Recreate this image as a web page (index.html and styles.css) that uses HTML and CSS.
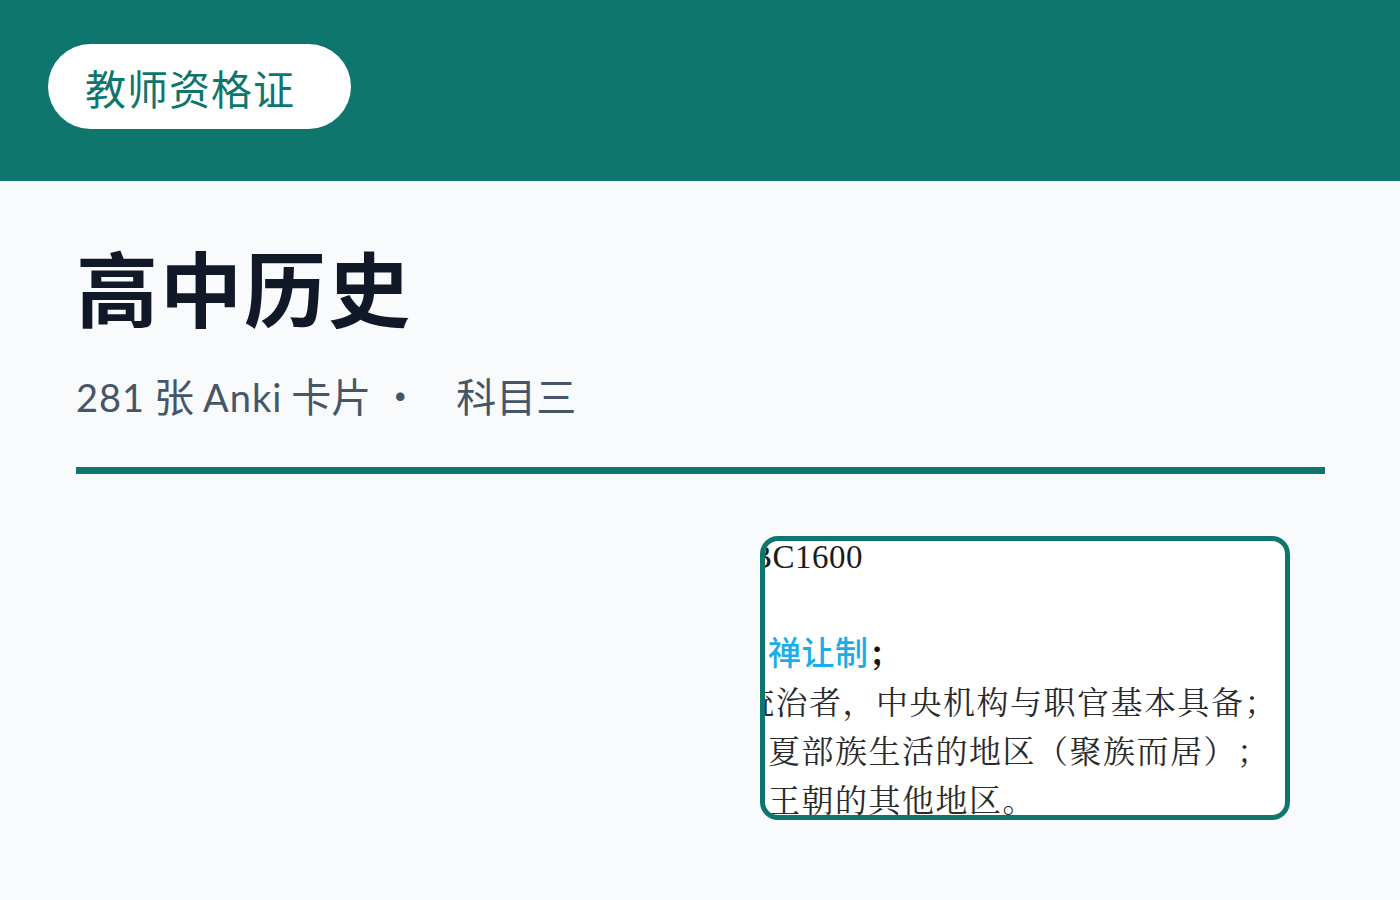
FILE: index.html
```html
<!DOCTYPE html>
<html lang="zh-CN">
<head>
<meta charset="utf-8">
<title>高中历史</title>
<link rel="stylesheet" href="styles.css">
</head>
<body>
<header class="topbar">
  <div class="pill">教师资格证</div>
</header>
<main class="main">
  <h1 class="title">高中历史</h1>
  <p class="subtitle"><span class="count"><span class="lat">281</span> 张 <span class="lat">Anki</span> 卡片 ·</span><span class="subject">科目三</span></p>
  <div class="divider"></div>
  <section class="grid">
    <div class="col-empty"></div>
    <div class="card">
      <div class="card-body">
        <div class="line latin indent-bc">BC1600</div>
        <div class="line blank">&nbsp;</div>
        <div class="line"><span class="hl">禅让制</span><span class="semi">；</span></div>
        <div class="line indent-cut">统治者，中央机构与职官基本具备；</div>
        <div class="line">夏部族生活的地区（聚族而居）；</div>
        <div class="line">王朝的其他地区。</div>
      </div>
    </div>
  </section>
</main>
</body>
</html>
```

FILE: styles.css
```css
html, body {
  margin: 0;
  padding: 0;
}
body {
  background: #f8fafc;
  font-family: "Noto Sans CJK SC", "Noto Sans", sans-serif;
  width: 1400px;
  height: 900px;
  overflow: hidden;
}
.topbar {
  height: 181px;
  background: #0f766e;
  box-sizing: border-box;
  padding: 44px 0 0 48px;
}
.pill {
  display: inline-flex;
  align-items: center;
  box-sizing: border-box;
  height: 85px;
  width: 303px;
  padding-left: 37px;
  background: #ffffff;
  border-radius: 43px;
  color: #0f766e;
  font-size: 41px;
  font-weight: 400;
  letter-spacing: 1px;
}
.main {
  padding: 0 75px 0 76px;
}
.title {
  margin: 55px 0 0 0;
  font-size: 82px;
  line-height: 100px;
  font-weight: 600;
  letter-spacing: 2px;
  color: #111827;
}
.subtitle {
  margin: 37px 0 0 0;
  font-family: "Noto Sans CJK SC", sans-serif;
  font-size: 40px;
  line-height: 44px;
  color: #475569;
  display: flex;
  gap: 36px;
}
.lat {
  font-family: "Lato", sans-serif;
  font-size: 38px;
  letter-spacing: 1px;
}
.divider {
  margin-top: 48px;
  height: 7px;
  background: #0f766e;
}
.grid {
  display: grid;
  grid-template-columns: 1fr 1fr;
  column-gap: 40px;
  margin-top: 62px;
}
.card {
  justify-self: end;
  margin-right: 35px;
  width: 530px;
  height: 284px;
  box-sizing: border-box;
  border: 5px solid #0f766e;
  border-radius: 18px;
  background: #ffffff;
  overflow: hidden;
}
.card-body {
  margin-top: -12px;
  padding-left: 3px;
  font-family: "Noto Serif CJK SC", "Noto Sans CJK SC", serif;
  font-size: 32px;
  line-height: 49px;
  letter-spacing: 1.5px;
  color: #2a2a2a;
  white-space: nowrap;
  text-spacing-trim: space-all;
}
.line {
  height: 49px;
}
.latin {
  font-family: "Liberation Serif", serif;
  font-size: 33px;
  letter-spacing: 0.5px;
  color: #1c1c1c;
  box-sizing: border-box;
  padding-top: 4px;
}
.indent-bc {
  text-indent: -18px;
}
.indent-cut {
  text-indent: -26px;
}
.hl {
  font-family: "Noto Sans CJK SC", sans-serif;
  font-size: 33px;
  letter-spacing: 0.5px;
  color: #19aee8;
  font-weight: 500;
}
.semi {
  color: #111111;
  font-weight: 700;
}
```
